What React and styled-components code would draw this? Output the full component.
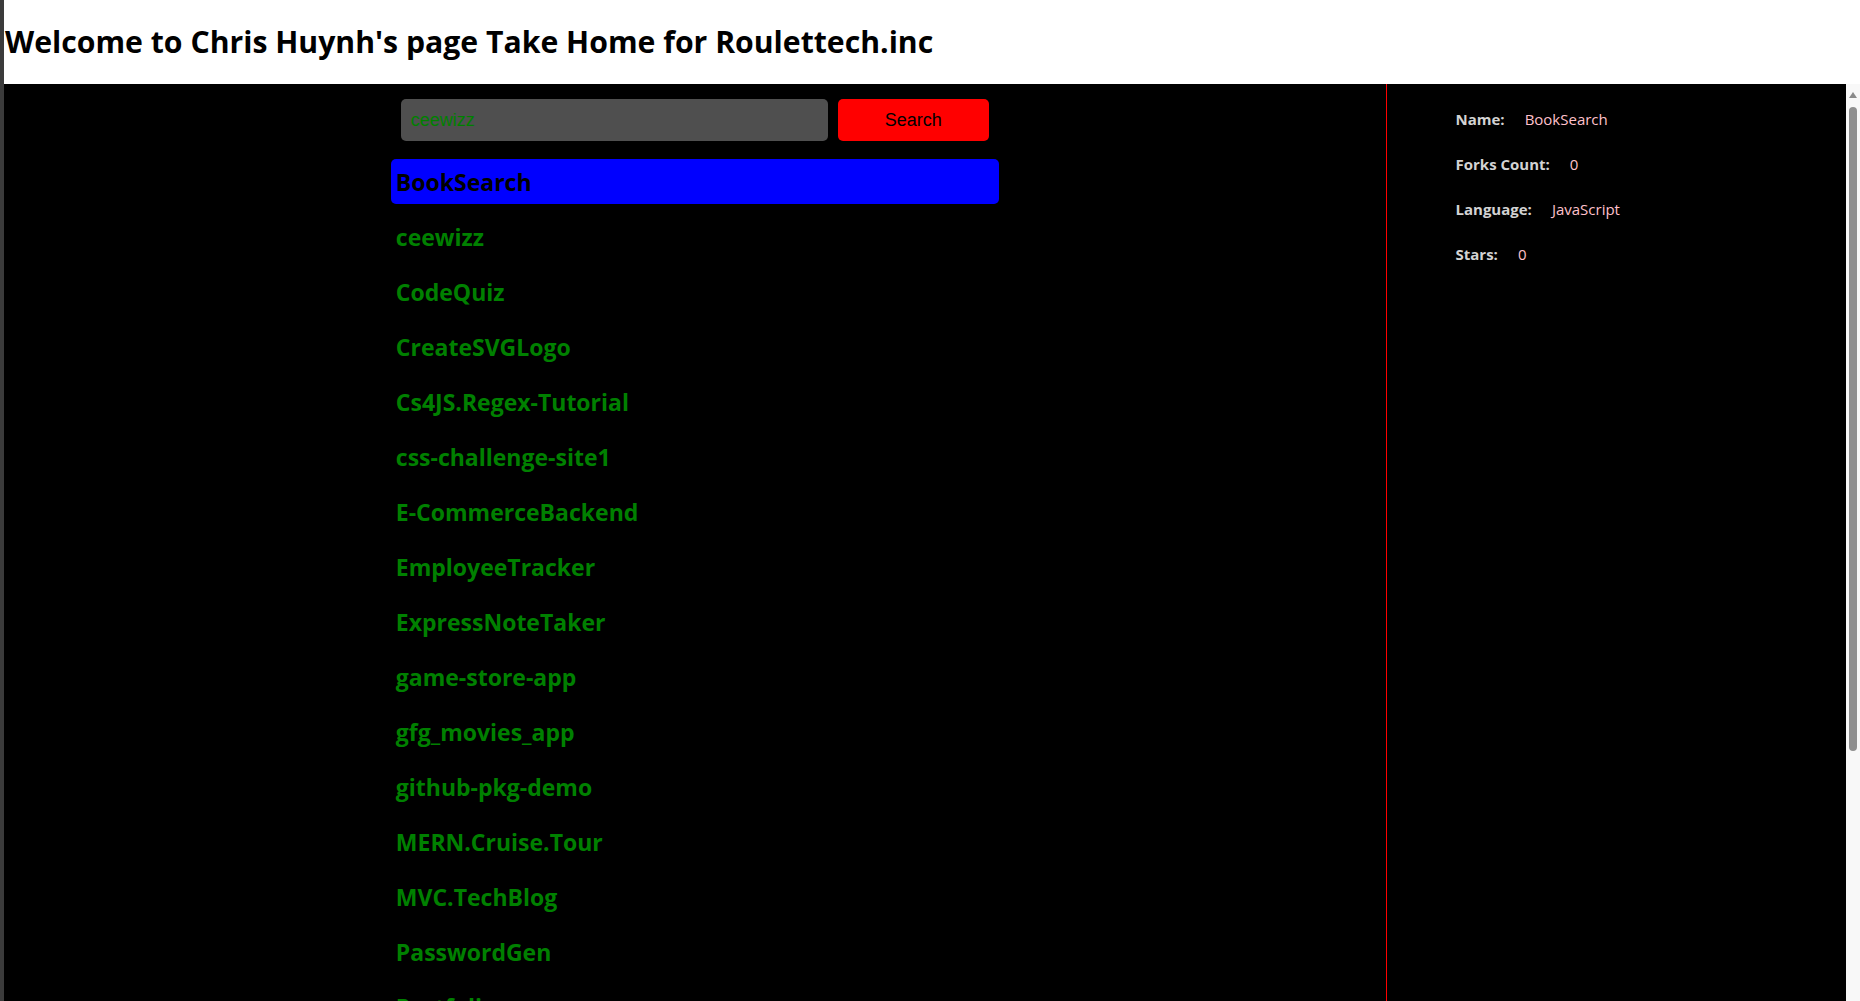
import styled, { createGlobalStyle } from "styled-components";

const GlobalStyle = createGlobalStyle`
    html, body {
        margin: 0;
        height: 100%;
        overflow: hidden;
    }
    body {
        font-family: "Open Sans", "Noto Sans", sans-serif;
    }
    * {
        box-sizing: border-box;
    }
`;

const Frame = styled.div`
    height: 100vh;
    display: flex;
    flex-direction: column;
    border-left: 4px solid #3b3b3b;
`;

const Header = styled.header`
    background-color: white;
    padding-left: 1px;
`;

const Title = styled.h1`
    margin: 21px 0;
    font-size: 30.2px;
    line-height: 42px;
    font-weight: 700;
    color: black;
`;

const Body = styled.div`
    flex: 1;
    min-height: 0;
    display: flex;
`;

const Main = styled.main`
    flex: 1;
    display: flex;
    overflow-y: auto;
    scrollbar-width: none;
    background-color: black;
`;

// the scroll track drawn beside the scrolling area
const ScrollTrack = styled.div`
    width: 14px;
    background-color: #f8f8f8;
    display: flex;
    flex-direction: column;
    align-items: center;
    padding-top: 8px;
`;

const ScrollArrow = styled.div`
    width: 0;
    height: 0;
    border-left: 4px solid transparent;
    border-right: 4px solid transparent;
    border-bottom: 6px solid #8a8a8a;
`;

const ScrollThumb = styled.div`
    width: 8px;
    height: 644px;
    margin-top: 9px;
    border-radius: 4px;
    background-color: #8f8f8f;
`;

const ListPane = styled.section`
    width: 75%;
    padding: 15px 0 20px;
`;

const Column = styled.div`
    width: 44%;
    margin: 0 auto;
`;

const SearchRow = styled.form`
    display: flex;
    gap: 10px;
    padding: 0 10px;
    margin-bottom: 18px;
`;

const SearchInput = styled.input`
    flex: 1;
    height: 42px;
    padding: 0 10px;
    border: none;
    border-radius: 5px;
    background-color: #4f4f4f;
    color: green;
    font-family: "Liberation Sans", Arial, sans-serif;
    font-size: 18px;
    outline: none;
`;

const SearchButton = styled.button`
    width: 151px;
    height: 42px;
    border: none;
    border-radius: 5px;
    background-color: red;
    color: black;
    font-family: "Liberation Sans", Arial, sans-serif;
    font-size: 18px;
    cursor: pointer;
`;

const RepoList = styled.div`
    display: flex;
    flex-direction: column;
    gap: 10px;
`;

const RepoItem = styled.div`
    padding: 7px 5px 5px;
    line-height: 33px;
    font-size: 23px;
    font-weight: 700;
    border-radius: 5px;
    color: ${(p) => (p.$active ? "black" : "green")};
    background-color: ${(p) => (p.$active ? "blue" : "transparent")};
    cursor: pointer;
`;

const DetailPane = styled.aside`
    width: 25%;
    border-left: 1px solid red;
    padding: 25px 0 0 69px;
`;

const DetailRow = styled.div`
    display: flex;
    gap: 20px;
    font-size: 15px;
    line-height: 21px;
    margin-bottom: 24px;
`;

const Label = styled.span`
    font-weight: 700;
    color: #d3d3d3;
`;

const Value = styled.span`
    color: pink;
`;

const repos = [
    "BookSearch",
    "ceewizz",
    "CodeQuiz",
    "CreateSVGLogo",
    "Cs4JS.Regex-Tutorial",
    "css-challenge-site1",
    "E-CommerceBackend",
    "EmployeeTracker",
    "ExpressNoteTaker",
    "game-store-app",
    "gfg_movies_app",
    "github-pkg-demo",
    "MERN.Cruise.Tour",
    "MVC.TechBlog",
    "PasswordGen",
    "Portfolio",
    "README-Generator",
    "Roulettech",
    "TeamProfileGenerator",
    "WeatherDashboard",
    "WorkDayScheduler",
];

export default function App() {
    const selected = "BookSearch";

    return (
        <Frame>
            <GlobalStyle />
            <Header>
                <Title>Welcome to Chris Huynh's page Take Home for Roulettech.inc</Title>
            </Header>
            <Body>
                <Main>
                    <ListPane>
                        <Column>
                            <SearchRow onSubmit={(e) => e.preventDefault()}>
                                <SearchInput defaultValue="ceewizz" />
                                <SearchButton type="submit">Search</SearchButton>
                            </SearchRow>
                            <RepoList>
                                {repos.map((name) => (
                                    <RepoItem key={name} $active={name === selected}>
                                        {name}
                                    </RepoItem>
                                ))}
                            </RepoList>
                        </Column>
                    </ListPane>
                    <DetailPane>
                        <DetailRow>
                            <Label>Name:</Label>
                            <Value>BookSearch</Value>
                        </DetailRow>
                        <DetailRow>
                            <Label>Forks Count:</Label>
                            <Value>0</Value>
                        </DetailRow>
                        <DetailRow>
                            <Label>Language:</Label>
                            <Value>JavaScript</Value>
                        </DetailRow>
                        <DetailRow>
                            <Label>Stars:</Label>
                            <Value>0</Value>
                        </DetailRow>
                    </DetailPane>
                </Main>
                <ScrollTrack>
                    <ScrollArrow />
                    <ScrollThumb />
                </ScrollTrack>
            </Body>
        </Frame>
    );
}
